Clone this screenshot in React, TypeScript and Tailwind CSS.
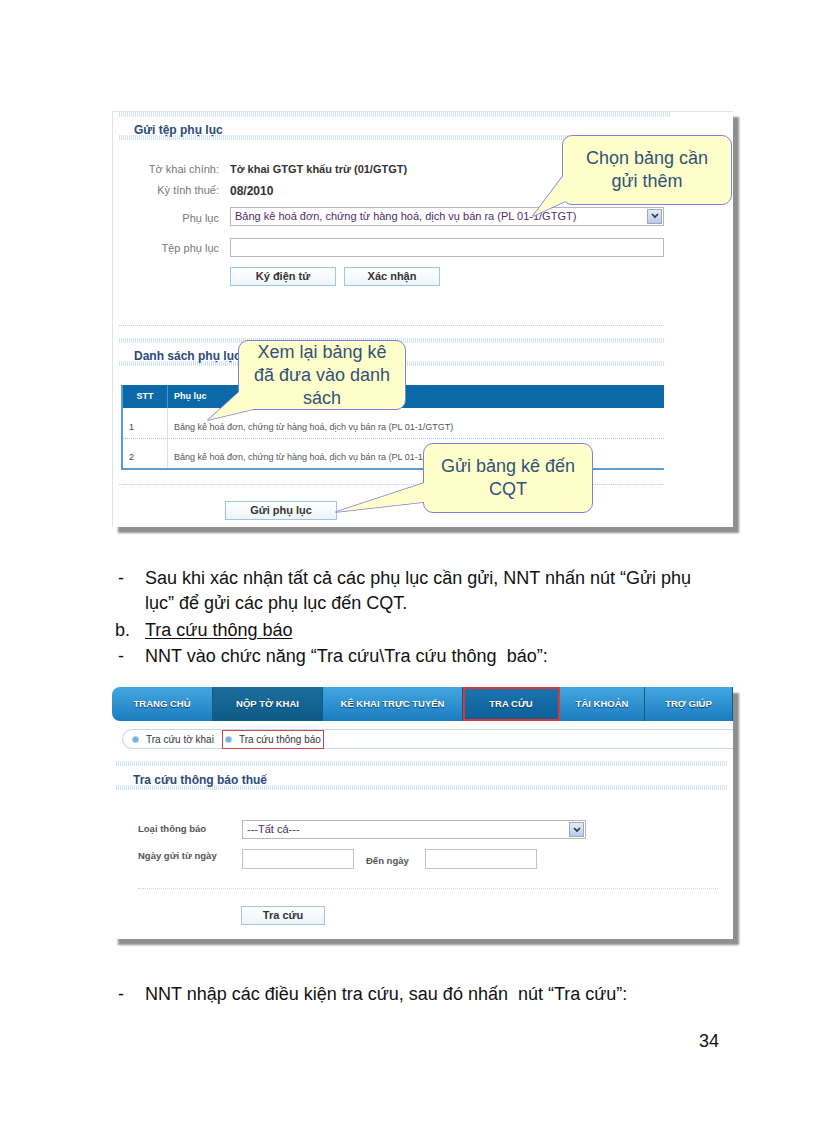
import type { ReactNode } from "react";

const shot = "font-['Liberation_Sans',Arial,sans-serif]";
const doc = "font-['Liberation_Sans',Arial,sans-serif]";

function Band({ className = "" }: { className?: string }) {
  return <div className={`h-[5px] bg-[repeating-linear-gradient(90deg,#cfe3f7_0_1px,#ffffff_1px_2px)] ${className}`} />;
}

function Dotted({ className = "" }: { className?: string }) {
  return <div className={`border-t border-dotted border-[#c9c9e6] ${className}`} />;
}

function Btn({ children, w }: { children: ReactNode; w: string }) {
  return (
    <div
      className={`${w} h-[19px] border border-[#9cc7ec] bg-gradient-to-b from-white to-[#eef4fb] text-[11px] font-bold text-[#333] flex items-center justify-center`}
    >
      {children}
    </div>
  );
}

function SelectBox({ w, text }: { w: string; text: string }) {
  return (
    <div className={`${w} h-[19px] border border-[#b7b7b7] bg-white flex items-center`}>
      <span className="flex-1 pl-[4px] text-[11px] text-[#4a2d6e] whitespace-nowrap overflow-hidden">{text}</span>
      <div className="w-[15px] h-[15px] mr-[1px] border border-[#9aa9c6] bg-gradient-to-b from-[#e4ecfa] to-[#b9caea] flex items-center justify-center">
        <svg width="8" height="6" viewBox="0 0 8 6">
          <path d="M1 1 L4 4 L7 1" stroke="#333" strokeWidth="1.6" fill="none" />
        </svg>
      </div>
    </div>
  );
}

function Callout({
  box,
  tail,
  lines,
}: {
  box: [number, number, number, number];
  tail: string;
  lines: string[];
}) {
  const [x, y, w, h] = box;
  return (
    <>
      <svg className="absolute left-0 top-0 pointer-events-none" width="816" height="1123">
        <path d={tail} fill="#ffffcc" stroke="#7f7fe0" strokeWidth="1.5" strokeLinejoin="round" />
      </svg>
      <div
        className="absolute rounded-[10px] border-[1.5px] border-[#7f7fe0] bg-[#ffffcc] flex flex-col items-center justify-center text-[18px] leading-[23px] text-[#30527a]"
        style={{ left: x, top: y, width: w, height: h }}
      >
        {lines.map((l) => (
          <span key={l}>{l}</span>
        ))}
      </div>
      <svg className="absolute left-0 top-0 pointer-events-none" width="816" height="1123">
        <path d={tail} fill="#ffffcc" stroke="none" />
      </svg>
    </>
  );
}

function TableRow({ n, last }: { n: string; last?: boolean }) {
  return (
    <div className={`flex h-[31px] ${last ? "border-b-2 border-[#5a9ccd]" : "border-b border-dotted border-[#a9c8e6]"}`}>
      <div className="w-[45px] border-r border-[#d5e3f0] pl-[6px] pt-[9px] flex items-center text-[9px] text-[#444]">{n}</div>
      <div className="flex-1 pl-[6px] pt-[9px] flex items-center text-[9px] text-[#555] whitespace-nowrap">
        Bảng kê hoá đơn, chứng từ hàng hoá, dịch vụ bán ra (PL 01-1/GTGT)
      </div>
    </div>
  );
}

function ScreenOne() {
  return (
    <div className={`${shot} ml-[112px] w-[621px] h-[416px] bg-white shadow-[6px_6px_2px_#8f8f8f] border-t border-l border-[#e3e3e3]`}>
      <Band className="w-[551px] ml-[6px]" />
      <div className="w-[551px] pl-[21px] pt-[4px] text-[12px] font-bold text-[#2b4a78] h-[18px]">Gửi tệp phụ lục</div>
      <Band className="w-[545px] ml-[6px]" />

      <div className="mt-[19px] flex flex-col">
        <div className="flex items-center h-[21px]">
          <div className="w-[107px] text-right pr-[1px] text-[11px] text-[#777]">Tờ khai chính:</div>
          <div className="pl-[10px] text-[11px] font-bold text-[#333]">Tờ khai GTGT khấu trừ (01/GTGT)</div>
        </div>
        <div className="flex items-center h-[21px]">
          <div className="w-[107px] text-right pr-[1px] text-[11px] text-[#777]">Kỳ tính thuế:</div>
          <div className="pl-[10px] text-[12px] font-bold text-[#333]">08/2010</div>
        </div>
        <div className="flex items-center h-[22px] mt-[4px]">
          <div className="w-[107px] text-right pr-[1px] text-[11px] text-[#777] pt-[4px]">Phụ lục</div>
          <div className="pl-[10px]">
            <SelectBox w="w-[434px]" text="Bảng kê hoá đơn, chứng từ hàng hoá, dịch vụ bán ra (PL 01-1/GTGT)" />
          </div>
        </div>
        <div className="flex items-center h-[22px] mt-[9px]">
          <div className="w-[107px] text-right pr-[1px] text-[11px] text-[#777] pt-[2px]">Tệp phụ lục</div>
          <div className="pl-[10px]">
            <div className="w-[434px] h-[19px] border border-[#b9b9b9] bg-white" />
          </div>
        </div>
        <div className="flex gap-[8px] ml-[117px] mt-[9px]">
          <Btn w="w-[106px]">Ký điện tử</Btn>
          <Btn w="w-[96px]">Xác nhận</Btn>
        </div>
      </div>

      <Dotted className="w-[545px] ml-[6px] mt-[39px]" />
      <Band className="w-[545px] ml-[6px] mt-[12px]" />
      <div className="w-[551px] pl-[21px] pt-[4px] text-[12px] font-bold text-[#2b4a78] h-[18px]">Danh sách phụ lục</div>
      <Band className="w-[545px] ml-[6px]" />

      <div className="ml-[8px] w-[543px] mt-[19px] border-l-2 border-[#5a9ccd]">
        <div className="flex h-[23px] bg-[#0b69a8] text-white text-[9px] font-bold">
          <div className="w-[45px] border-r border-[#4c95cb] flex items-center justify-center">STT</div>
          <div className="flex-1 pl-[6px] flex items-center">Phụ lục</div>
        </div>
        <TableRow n="1" />
        <TableRow n="2" last />
      </div>

      <Dotted className="w-[545px] ml-[6px] mt-[14px]" />
      <div className="ml-[112px] mt-[16px]">
        <Btn w="w-[112px]">Gửi phụ lục</Btn>
      </div>
    </div>
  );
}

const navItems: { label: string; w: string; tone: string }[] = [
  { label: "TRANG CHỦ", w: "w-[101px]", tone: "from-[#43a6e0] to-[#1b7cc0] rounded-l-[8px]" },
  { label: "NỘP TỜ KHAI", w: "w-[110px]", tone: "from-[#1c6d9c] to-[#0d5a86]" },
  { label: "KÊ KHAI TRỰC TUYẾN", w: "w-[140px]", tone: "from-[#43a6e0] to-[#1b7cc0]" },
  { label: "TRA CỨU", w: "w-[97px]", tone: "from-[#1d75b0] to-[#0c5e96] outline-2 outline-[#d83a3a] -outline-offset-2" },
  { label: "TÀI KHOẢN", w: "w-[85px]", tone: "from-[#43a6e0] to-[#1b7cc0]" },
  { label: "TRỢ GIÚP", w: "w-[88px]", tone: "from-[#43a6e0] to-[#1b7cc0]" },
];

function ScreenTwo() {
  return (
    <div className={`${shot} ml-[112px] w-[621px] h-[252px] bg-white shadow-[6px_6px_2px_#8f8f8f]`}>
      <div className="flex h-[34px] mt-[2px]">
        {navItems.map((it) => (
          <div
            key={it.label}
            className={`${it.w} ${it.tone} bg-gradient-to-b border-r border-[#0f5f7a] flex items-center justify-center text-[9.5px] font-bold text-white [text-shadow:0_1px_1px_#0a3e66]`}
          >
            {it.label}
          </div>
        ))}
      </div>
      <div className="ml-[10px] mt-[8px] h-[20px] w-[611px] rounded-l-[10px] border border-r-0 border-[#c4d8ef] flex items-center text-[10px] text-[#333]">
        <div className="flex items-center pl-[10px] pr-[8px]">
          <span className="w-[5px] h-[5px] rounded-full bg-[#6fb1e6] ring-1 ring-[#a9d0f1] mr-[8px]" />
          Tra cứu tờ khai
        </div>
        <div className="flex items-center h-[19px] w-[102px] border-[1.5px] border-[#d8424a] pl-[3px]">
          <span className="w-[5px] h-[5px] rounded-full bg-[#6fb1e6] ring-1 ring-[#a9d0f1] mr-[8px]" />
          <span className="whitespace-nowrap overflow-hidden">Tra cứu thông báo</span>
        </div>
      </div>

      <Band className="w-[611px] ml-[4px] mt-[12px]" />
      <div className="pl-[21px] pt-[5px] text-[12px] font-bold text-[#2b4a78] h-[19px]">Tra cứu thông báo thuế</div>
      <Band className="w-[611px] ml-[4px]" />

      <div className="mt-[30px] flex items-center">
        <div className="w-[130px] pl-[26px] text-[9.5px] font-bold text-[#555]">Loại thông báo</div>
        <SelectBox w="w-[344px]" text="---Tất cả---" />
      </div>
      <div className="mt-[10px] flex items-center">
        <div className="w-[130px] pl-[26px] text-[9.5px] font-bold text-[#555] -mt-[6px]">Ngày gửi từ ngày</div>
        <div className="w-[112px] h-[20px] border border-[#c2c2c2]" />
        <div className="w-[71px] pl-[12px] text-[9.5px] font-bold text-[#555] pt-[4px]">Đến ngày</div>
        <div className="w-[112px] h-[20px] border border-[#c2c2c2]" />
      </div>
      <Dotted className="w-[580px] ml-[26px] mt-[19px] border-[#dccbe6]" />
      <div className="ml-[129px] mt-[17px]">
        <Btn w="w-[84px]">Tra cứu</Btn>
      </div>
    </div>
  );
}

export default function App() {
  return (
    <div className={`${doc} relative w-[816px] h-[1123px] bg-white overflow-hidden text-black`}>
      <div className="pt-[111px]">
        <ScreenOne />
      </div>

      <div className="mt-[39px] text-[18px] leading-[25px] text-[#111]">
        <div className="flex">
          <span className="w-[145px] pl-[118px]">-</span>
          <div className="w-[570px]">
            <div>Sau khi xác nhận tất cả các phụ lục cần gửi, NNT nhấn nút “Gửi phụ</div>
            <div>lục” để gửi các phụ lục đến CQT.</div>
          </div>
        </div>
        <div className="flex mt-[2px]">
          <span className="w-[145px] pl-[115px]">b.</span>
          <span className="underline underline-offset-2">Tra cứu thông báo</span>
        </div>
        <div className="flex mt-[1px]">
          <span className="w-[145px] pl-[118px]">-</span>
          <span>NNT vào chức năng “Tra cứu\Tra cứu thông&nbsp; báo”:</span>
        </div>
      </div>

      <div className="mt-[18px]">
        <ScreenTwo />
      </div>

      <div className="mt-[43px] text-[18px] leading-[25px] text-[#111] flex">
        <span className="w-[145px] pl-[118px]">-</span>
        <span>NNT nhập các điều kiện tra cứu, sau đó nhấn&nbsp; nút “Tra cứu”:</span>
      </div>

      <div className="mt-[22px] ml-[699px] text-[18px] leading-[25px] text-[#111]">34</div>

      <Callout
        box={[562, 135, 170, 70]}
        tail="M 563 176 L 533 216 L 570 199"
        lines={["Chọn bảng cần", "gửi thêm"]}
      />
      <Callout
        box={[238, 340, 168, 70]}
        tail="M 239 392 L 208 420 L 254 409"
        lines={["Xem lại bảng kê", "đã đưa vào danh", "sách"]}
      />
      <Callout
        box={[423, 443, 170, 70]}
        tail="M 424 483 L 336 512 L 424 502"
        lines={["Gửi bảng kê đến", "CQT"]}
      />
    </div>
  );
}
